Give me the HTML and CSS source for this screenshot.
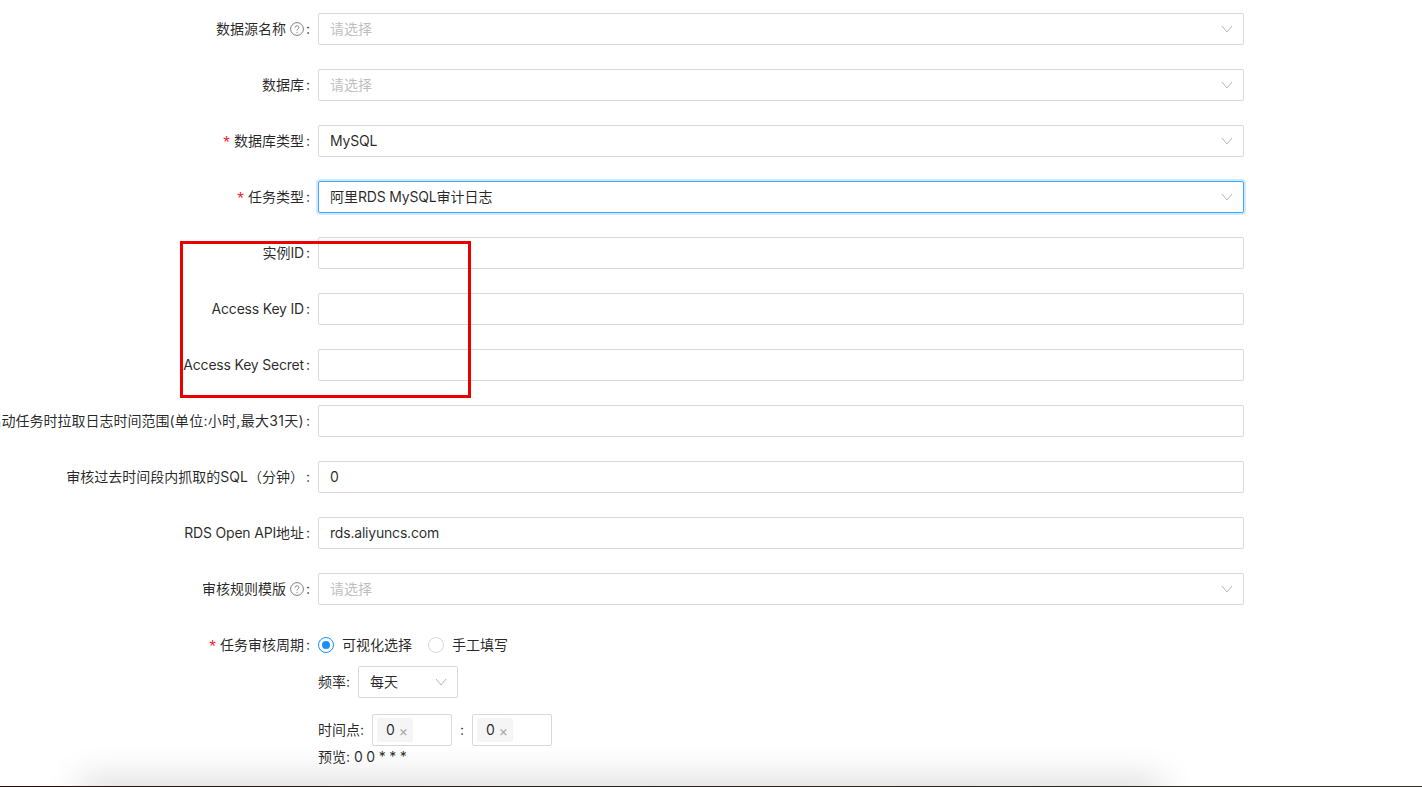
FILE: index.html
```html
<!DOCTYPE html>
<html lang="en">
<head>
    <meta charset="UTF-8">
    <title>审核任务</title>
    <link rel="stylesheet" href="styles.css">
</head>
<body>
    <form class="task-form">
        <div class="form-row">
            <label class="form-label">数据源名称<svg class="help-icon" viewBox="0 0 14 14"><circle cx="7" cy="7" r="6.4"/><path d="M5.2 5.5a1.8 1.8 0 1 1 2.7 1.6c-.6.3-.9.7-.9 1.4"/><path d="M7 9.9v.9"/></svg><span class="colon">:</span></label>
            <div class="select placeholder"><span class="value">请选择</span><svg class="arrow" viewBox="0 0 12 8"><path d="M1 1l5 6 5-6"/></svg></div>
        </div>
        <div class="form-row">
            <label class="form-label">数据库<span class="colon">:</span></label>
            <div class="select placeholder"><span class="value">请选择</span><svg class="arrow" viewBox="0 0 12 8"><path d="M1 1l5 6 5-6"/></svg></div>
        </div>
        <div class="form-row">
            <label class="form-label"><span class="required">*</span>数据库类型<span class="colon">:</span></label>
            <div class="select"><span class="value en">MySQL</span><svg class="arrow" viewBox="0 0 12 8"><path d="M1 1l5 6 5-6"/></svg></div>
        </div>
        <div class="form-row">
            <label class="form-label"><span class="required">*</span>任务类型<span class="colon">:</span></label>
            <div class="select focused"><span class="value">阿里<span class="en">RDS MySQL</span>审计日志</span><svg class="arrow" viewBox="0 0 12 8"><path d="M1 1l5 6 5-6"/></svg></div>
        </div>
        <div class="form-row">
            <label class="form-label">实例<span class="en">ID</span><span class="colon">:</span></label>
            <input class="text-input" type="text">
        </div>
        <div class="form-row">
            <label class="form-label"><span class="en">Access Key ID</span><span class="colon">:</span></label>
            <input class="text-input" type="text">
        </div>
        <div class="form-row">
            <label class="form-label"><span class="en">Access Key Secret</span><span class="colon">:</span></label>
            <input class="text-input" type="text">
        </div>
        <div class="form-row">
            <label class="form-label">启动任务时拉取日志时间范围<span class="unit-note">(单位:小时,最大31天)</span><span class="colon">:</span></label>
            <input class="text-input" type="text">
        </div>
        <div class="form-row">
            <label class="form-label">审核过去时间段内抓取的SQL（分钟）<span class="colon">:</span></label>
            <input class="text-input" type="text" value="0">
        </div>
        <div class="form-row">
            <label class="form-label"><span class="en">RDS Open API</span>地址<span class="colon">:</span></label>
            <input class="text-input en" type="text" value="rds.aliyuncs.com">
        </div>
        <div class="form-row">
            <label class="form-label">审核规则模版<svg class="help-icon" viewBox="0 0 14 14"><circle cx="7" cy="7" r="6.4"/><path d="M5.2 5.5a1.8 1.8 0 1 1 2.7 1.6c-.6.3-.9.7-.9 1.4"/><path d="M7 9.9v.9"/></svg><span class="colon">:</span></label>
            <div class="select placeholder"><span class="value">请选择</span><svg class="arrow" viewBox="0 0 12 8"><path d="M1 1l5 6 5-6"/></svg></div>
        </div>
        <div class="form-row cycle-row">
            <label class="form-label"><span class="required">*</span>任务审核周期<span class="colon">:</span></label>
            <div class="cycle-body">
                <div class="radio-group">
                    <span class="radio checked"></span><span class="radio-text">可视化选择</span>
                    <span class="radio"></span><span class="radio-text">手工填写</span>
                </div>
                <div class="freq-line">
                    <span class="freq-label">频率:</span>
                    <div class="select freq-select"><span class="value">每天</span><svg class="arrow" viewBox="0 0 12 8"><path d="M1 1l5 6 5-6"/></svg></div>
                </div>
                <div class="time-line">
                    <span class="time-label">时间点:</span>
                    <div class="tag-box"><span class="tag"><span class="value">0</span><i class="tag-close">×</i></span></div>
                    <span class="time-colon">:</span>
                    <div class="tag-box"><span class="tag"><span class="value">0</span><i class="tag-close">×</i></span></div>
                </div>
                <div class="preview">预览: <span class="en">0 0 * * *</span></div>
            </div>
        </div>
    </form>

    <div class="highlight-box"></div>
    <div class="bottom-shadow"></div>
    <div class="bottom-strip"></div>
</body>
</html>
```

FILE: styles.css
```css
* {
    box-sizing: border-box;
}

html, body {
    height: 100%;
}

body {
    margin: 0;
    overflow: hidden;
    position: relative;
    background-color: #fff;
    color: rgba(0, 0, 0, 0.85);
    font-family: Inter, "Noto Sans CJK SC", sans-serif;
    font-size: 14px;
}

.en {
    letter-spacing: -0.2px;
}

.unit-note {
    letter-spacing: 0.3px;
}

.task-form {
    width: 1244px;
    padding-top: 13px;
}

.form-row {
    display: flex;
    height: 32px;
    margin-bottom: 24px;
}

.form-label {
    flex: 0 0 318px;
    min-width: 0;
    display: flex;
    align-items: center;
    justify-content: flex-end;
    white-space: nowrap;
    height: 32px;
    padding-bottom: 2px;
}

.colon {
    margin: 0 8px 0 2px;
}

.required {
    color: #f5222d;
    margin: 5px 4px 0 0;
    font-family: "Liberation Sans", sans-serif;
    font-size: 17px;
    line-height: 1;
}

.help-icon {
    width: 14px;
    height: 14px;
    margin: 2px 0 0 4px;
    fill: none;
    stroke: #7f7f7f;
    stroke-width: 1;
}

.select, .text-input {
    flex: 1;
    height: 32px;
    border: 1px solid #d9d9d9;
    border-radius: 2px;
    background: #fff;
    padding: 0 11px;
    font-family: inherit;
    font-size: 14px;
    color: rgba(0, 0, 0, 0.85);
}

.text-input {
    padding-bottom: 2px;
}

.select {
    display: flex;
    align-items: center;
    justify-content: space-between;
}

.value {
    padding-bottom: 2px;
}

.select.placeholder {
    color: #bfbfbf;
}

.select.focused {
    border-color: #40a9ff;
    box-shadow: 0 0 0 2px rgba(24, 144, 255, 0.2);
}

.arrow {
    width: 12px;
    height: 8px;
    margin-right: -1px;
    fill: none;
    stroke: #b5b5b5;
    stroke-width: 1;
}

.cycle-row {
    height: auto;
}

.cycle-body {
    flex: 1;
}

.radio-group {
    display: flex;
    align-items: center;
    height: 32px;
}

.radio {
    width: 16px;
    height: 16px;
    border: 1px solid #d9d9d9;
    border-radius: 50%;
    background: #fff;
    display: flex;
    align-items: center;
    justify-content: center;
}

.radio.checked {
    border-color: #1890ff;
}

.radio.checked::after {
    content: "";
    width: 8px;
    height: 8px;
    border-radius: 50%;
    background: #1890ff;
}

.radio-text {
    margin: 0 16px 0 8px;
    padding-bottom: 2px;
}

.freq-line, .time-line {
    display: flex;
    align-items: center;
}

.freq-line {
    height: 32px;
    margin-top: 5px;
}

.freq-label, .time-label {
    margin-right: 8px;
    padding-bottom: 2px;
}

.freq-select {
    flex: 0 0 100px;
}

.time-line {
    height: 32px;
    margin-top: 16px;
}

.tag-box {
    width: 80px;
    height: 32px;
    border: 1px solid #d9d9d9;
    border-radius: 2px;
    padding: 3px 4px;
}

.tag {
    display: inline-flex;
    align-items: center;
    justify-content: space-between;
    width: 36px;
    height: 24px;
    padding: 0 5px 0 9px;
    background: #f5f5f5;
    border-radius: 2px;
}

.tag-close {
    font-style: normal;
    font-size: 14px;
    color: #a6a6a6;
}

.time-colon {
    width: 20px;
    text-align: center;
    padding-bottom: 2px;
}

.preview {
    height: 22px;
    line-height: 22px;
}

.highlight-box {
    position: absolute;
    left: 180px;
    top: 241px;
    width: 291px;
    height: 157px;
    border: 3px solid #eb0000;
}

.bottom-shadow {
    position: absolute;
    left: 90px;
    right: 270px;
    top: 790px;
    height: 10px;
    box-shadow: 0 0 36px 10px rgba(0, 0, 0, 0.16);
}

.bottom-strip {
    position: absolute;
    left: 0;
    right: 0;
    bottom: 0;
    height: 1px;
    background: linear-gradient(90deg, #2a0d08, #2b2118 35%, #2a2622 70%, #33302c);
}
```
